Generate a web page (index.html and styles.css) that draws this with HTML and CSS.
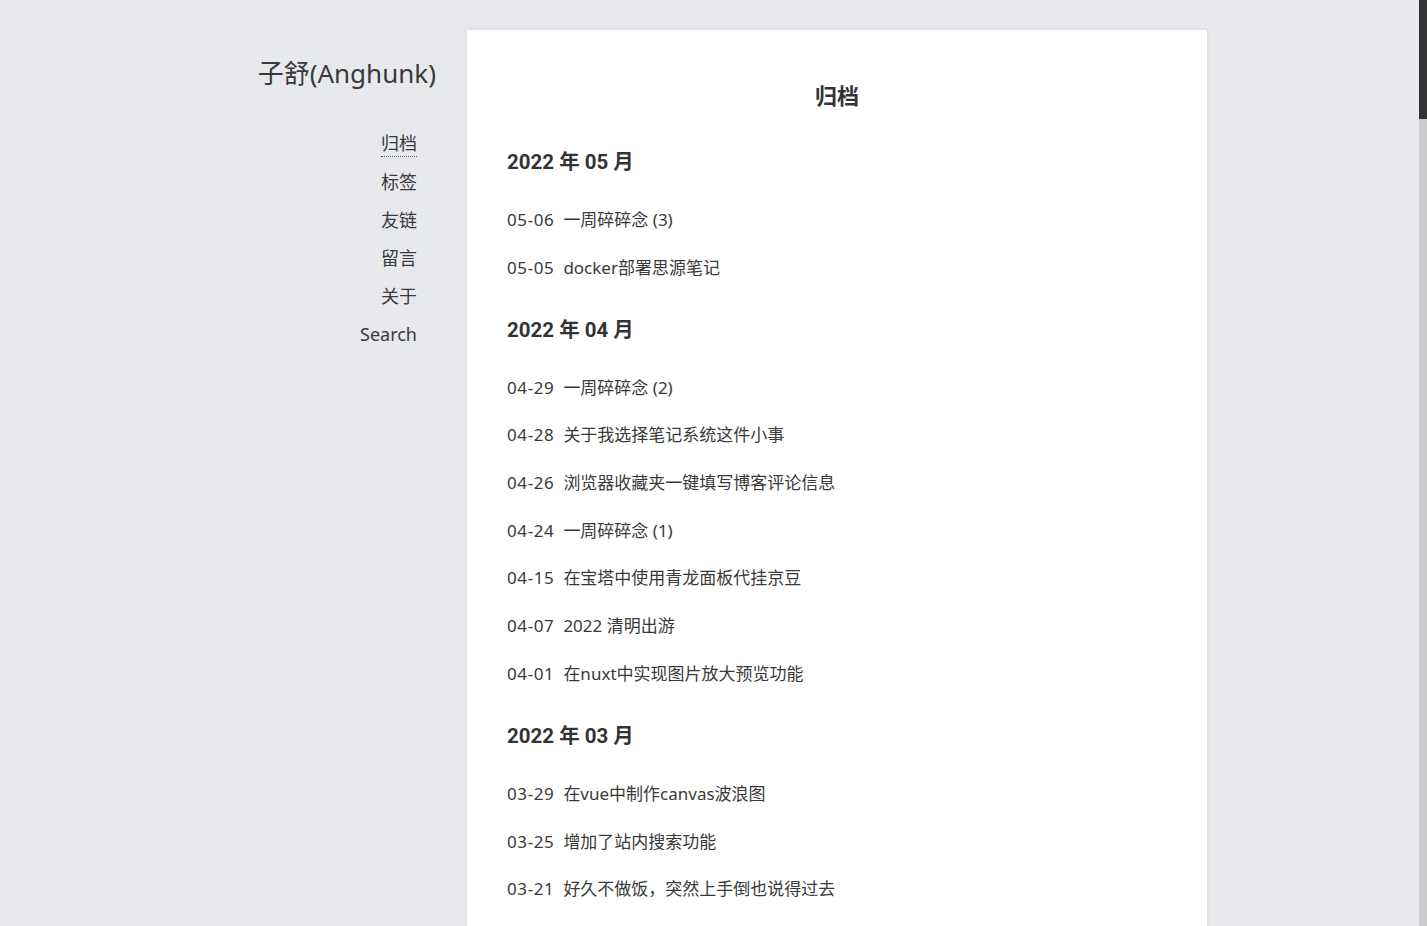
FILE: index.html
```html
<!DOCTYPE html>
<html lang="zh-CN">
<head>
<meta charset="utf-8">
<title>归档 - 子舒(Anghunk)</title>
<link rel="stylesheet" href="styles.css">
</head>
<body>
<div class="layout">
  <aside class="sidebar">
    <h1 class="site-title">子舒(Anghunk)</h1>
    <nav class="nav">
      <a class="nav-link active" href="#">归档</a>
      <a class="nav-link" href="#">标签</a>
      <a class="nav-link" href="#">友链</a>
      <a class="nav-link" href="#">留言</a>
      <a class="nav-link" href="#">关于</a>
      <a class="nav-link" href="#">Search</a>
    </nav>
  </aside>
  <main class="card">
    <h2 class="page-title">归档</h2>
    <section class="month">
      <h3 class="month-title">2022 年 05 月</h3>
      <ul class="posts">
        <li><span class="date">05-06</span><a href="#">一周碎碎念 (3)</a></li>
        <li><span class="date">05-05</span><a href="#">docker部署思源笔记</a></li>
      </ul>
    </section>
    <section class="month">
      <h3 class="month-title">2022 年 04 月</h3>
      <ul class="posts">
        <li><span class="date">04-29</span><a href="#">一周碎碎念 (2)</a></li>
        <li><span class="date">04-28</span><a href="#">关于我选择笔记系统这件小事</a></li>
        <li><span class="date">04-26</span><a href="#">浏览器收藏夹一键填写博客评论信息</a></li>
        <li><span class="date">04-24</span><a href="#">一周碎碎念 (1)</a></li>
        <li><span class="date">04-15</span><a href="#">在宝塔中使用青龙面板代挂京豆</a></li>
        <li><span class="date">04-07</span><a href="#">2022 清明出游</a></li>
        <li><span class="date">04-01</span><a href="#">在nuxt中实现图片放大预览功能</a></li>
      </ul>
    </section>
    <section class="month">
      <h3 class="month-title">2022 年 03 月</h3>
      <ul class="posts">
        <li><span class="date">03-29</span><a href="#">在vue中制作canvas波浪图</a></li>
        <li><span class="date">03-25</span><a href="#">增加了站内搜索功能</a></li>
        <li><span class="date">03-21</span><a href="#">好久不做饭，突然上手倒也说得过去</a></li>
      </ul>
    </section>
  </main>
</div>
<div class="scrollbar"><div class="scrollbar-thumb"></div></div>
</body>
</html>
```
FILE: styles.css
```css
html, body {
  margin: 0;
  padding: 0;
  height: 100%;
  overflow: hidden;
}
body {
  background: #e8e9ed;
  color: #333;
  font-family: "Noto Sans", "Noto Sans CJK SC", sans-serif;
}
a {
  color: inherit;
  text-decoration: none;
}
.layout {
  width: 995px;
  margin: 0 auto;
  padding-right: 8px;
  display: flex;
  gap: 30px;
  padding-top: 30px;
  box-sizing: content-box;
}
.sidebar {
  width: 225px;
  flex: none;
  display: flex;
  flex-direction: column;
  align-items: flex-end;
}
.site-title {
  margin: 24px 0 0;
  font-size: 26px;
  font-weight: 400;
  line-height: 38px;
  color: #3a3a3a;
  transform: translateX(-1px);
}
.nav {
  display: flex;
  flex-direction: column;
  align-items: flex-end;
  margin-top: 39px;
  padding-right: 20px;
  gap: 12px;
}
.nav-link {
  font-size: 18px;
  line-height: 26px;
  color: #3a3a3a;
}
.nav-link.active {
  border-bottom: 1px dotted #555;
  line-height: 24px;
  padding-bottom: 1px;
}
.card {
  width: 740px;
  flex: none;
  background: #fff;
  box-shadow: 0 0 4px rgba(0, 0, 0, 0.08);
  padding: 46px 40px 40px;
  box-sizing: border-box;
  min-height: 1000px;
}
.page-title {
  margin: 0 0 32px;
  text-align: center;
  font-size: 22px;
  font-weight: 700;
  line-height: 38px;
}
.month-title {
  margin: 0 0 28px;
  font-family: "Roboto", "Noto Sans CJK SC", sans-serif;
  font-size: 20.5px;
  font-weight: 700;
  line-height: 32px;
}
.posts {
  list-style: none;
  margin: 0 0 32px;
  padding: 0;
}
.posts li {
  font-size: 17px;
  line-height: 28px;
  margin-bottom: 19.7px;
  color: #3a3a3a;
}
.date {
  margin-right: 9px;
  letter-spacing: 0.6px;
}
.scrollbar {
  position: fixed;
  top: 0;
  right: 0;
  width: 8px;
  height: 100%;
  background: #cbcbcb;
}
.scrollbar-thumb {
  height: 119px;
  background: #333;
}
```
